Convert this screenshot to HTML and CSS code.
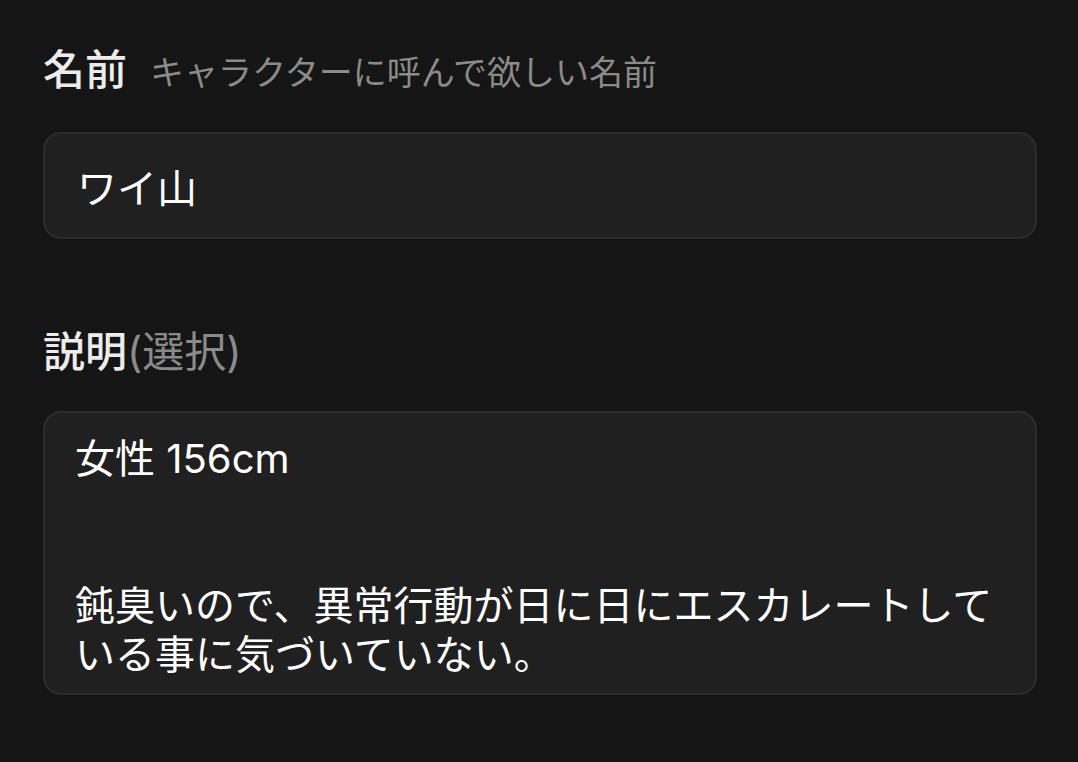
FILE: index.html
```html
<!DOCTYPE html>
<html lang="ja">
<head>
  <meta charset="UTF-8" />
  <meta name="viewport" content="width=device-width, initial-scale=1.0" />
  <title>キャラクター設定</title>
  <link rel="stylesheet" href="styles.css">
</head>
<body>

  <main class="form">
    <div class="field">
      <label class="label" for="name">名前<span class="hint hint-sep">キャラクターに呼んで欲しい名前</span></label>
      <input class="input" type="text" id="name" value="ワイ山" />
    </div>

    <div class="field">
      <label class="label" for="desc">説明<span class="hint hint-big">(選択)</span></label>
      <textarea class="input textarea" id="desc">女性 156cm


鈍臭いので、異常行動が日に日にエスカレートしている事に気づいていない。</textarea>
    </div>
  </main>

</body>
</html>
```

FILE: styles.css
```css
body {
  margin: 0;
  background-color: #151515;
  color: #ececec;
  font-family: 'Inter', 'Noto Sans CJK JP', 'Noto Sans', sans-serif;
}
.form { padding: 41px 41px 0 43px; display: flex; flex-direction: column; gap: 84px; }
.field { display: flex; flex-direction: column; }
.label { font-size: 42px; font-weight: 500; line-height: 58px; margin-bottom: 30px; color: #ececec; }
.hint { font-size: 34px; font-weight: 400; color: #8a8a8a; }
.hint-big { font-size: 42px; }
.hint-sep { margin-left: 23px; }
.input {
  box-sizing: border-box;
  width: 100%;
  height: 107px;
  padding: 0 32px;
  background-color: #202020;
  border: 2px solid #2c2c2c;
  border-radius: 18px;
  color: #fff;
  font-family: inherit;
  font-size: 40px;
  outline: none;
}
.textarea {
  height: 284px;
  padding: 21px 30px 12px 30px;
  line-height: 49px;
  resize: none;
  overflow: hidden;
}
```
